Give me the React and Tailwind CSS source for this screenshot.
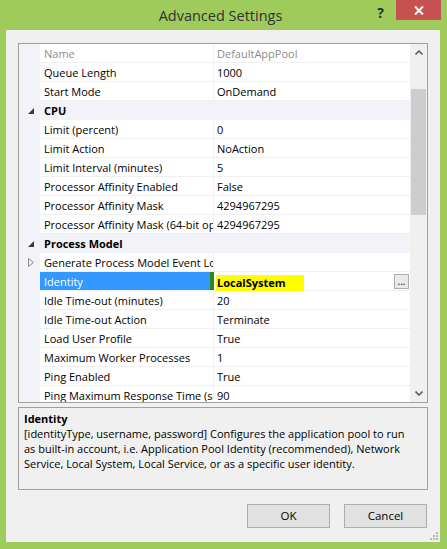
import React from "react";

const rows = [
  { name: "Name", value: "DefaultAppPool", muted: true },
  { name: "Queue Length", value: "1000" },
  { name: "Start Mode", value: "OnDemand" },
  { cat: "CPU" },
  { name: "Limit (percent)", value: "0" },
  { name: "Limit Action", value: "NoAction" },
  { name: "Limit Interval (minutes)", value: "5" },
  { name: "Processor Affinity Enabled", value: "False" },
  { name: "Processor Affinity Mask", value: "4294967295" },
  { name: "Processor Affinity Mask (64-bit option)", value: "4294967295" },
  { cat: "Process Model" },
  { name: "Generate Process Model Event Log Entry", value: "", expand: true },
  { name: "Identity", value: "LocalSystem", selected: true },
  { name: "Idle Time-out (minutes)", value: "20" },
  { name: "Idle Time-out Action", value: "Terminate" },
  { name: "Load User Profile", value: "True" },
  { name: "Maximum Worker Processes", value: "1" },
  { name: "Ping Enabled", value: "True" },
  { name: "Ping Maximum Response Time (seconds)", value: "90" },
];

const CollapseIcon = () => (
  <svg width="6" height="6" viewBox="0 0 6 6">
    <polygon points="6,0 6,6 0,6" fill="#3c3c3c" />
  </svg>
);

const ExpandIcon = () => (
  <svg width="6" height="9" viewBox="0 0 6 9">
    <polygon points="0.5,0.5 5.5,4.5 0.5,8.5" fill="none" stroke="#8a8a8a" strokeWidth="1" />
  </svg>
);

const Row = ({ row }) => {
  if (row.cat) {
    return (
      <div className="flex h-[19px] shrink-0 bg-[#f1f3f8]">
        <div className="w-[21px] flex items-center justify-center pl-[2px]">
          <CollapseIcon />
        </div>
        <div className="pl-[4px] pt-[1px] leading-[18px] font-bold text-black">{row.cat}</div>
      </div>
    );
  }
  return (
    <div className="flex h-[19px] shrink-0">
      <div className="w-[21px] bg-[#f1f3f8] flex items-center justify-center pl-[2px]">
        {row.expand && <ExpandIcon />}
      </div>
      {row.selected ? (
        <div className="w-[174px] flex border-b border-[#f0f0f0]">
          <div className="w-[170px] bg-[#3399ff] text-white pl-[4px] pt-[1px] leading-[17px] whitespace-nowrap overflow-hidden">
            {row.name}
          </div>
          <div className="w-[4px] bg-[#2e8b12]" />
        </div>
      ) : (
        <div
          className={`w-[174px] border-r border-b border-[#f0f0f0] pl-[4px] pt-[1px] leading-[17px] whitespace-nowrap overflow-hidden ${
            row.muted ? "text-[#8c8c8c]" : "text-black"
          }`}
        >
          {row.name}
        </div>
      )}
      {row.selected ? (
        <div className="flex-1 flex items-center border-b border-[#f0f0f0] pl-[2px] pr-[1px]">
          <span className="bg-[#ffff00] font-bold text-black leading-[16px] pl-[1px] pr-[18px] mt-[3px]">
            {row.value}
          </span>
          <div className="ml-auto w-[15px] h-[15px] border border-[#adadad] bg-[#e9e9e9] text-[10px] leading-[10px] text-black flex items-center justify-center">
            ...
          </div>
        </div>
      ) : (
        <div
          className={`flex-1 border-b border-[#f0f0f0] pl-[3px] pt-[1px] leading-[17px] whitespace-nowrap overflow-hidden ${
            row.muted ? "text-[#8c8c8c]" : "text-black"
          }`}
        >
          {row.value}
        </div>
      )}
    </div>
  );
};

const Chevron = ({ up }) => (
  <svg width="8" height="5" viewBox="0 0 8 5">
    <polyline
      points={up ? "0.5,4.5 4,1 7.5,4.5" : "0.5,0.5 4,4 7.5,0.5"}
      fill="none"
      stroke="#606060"
      strokeWidth="1.6"
    />
  </svg>
);

export default function App() {
  return (
    <div
      className="w-[447px] h-[549px] bg-[#9ecb5c] flex flex-col pl-[6px] pr-[7px] pb-[7px] text-[11px]"
      style={{ fontFamily: '"Open Sans", "Noto Sans", sans-serif' }}
    >
      {/* title bar */}
      <div className="h-[30px] flex shrink-0 -mr-[7px] -ml-[6px]">
        <div className="flex-1" />
        <div className="text-[14.5px] text-[#333333] leading-[30px] pt-[1px]">Advanced Settings</div>
        <div className="flex-1 flex justify-end items-start pr-[6px]">
          <div className="text-[14px] font-bold text-[#2b2b2b] leading-[20px] mt-[3px] mr-[12px]">?</div>
          <div className="w-[45px] h-[20px] bg-[#c75050] flex items-center justify-center">
            <svg width="10" height="9" viewBox="0 0 10 9">
              <path d="M1 0.5 L9 8.5 M9 0.5 L1 8.5" stroke="white" strokeWidth="2" />
            </svg>
          </div>
        </div>
      </div>

      {/* client */}
      <div className="relative flex-1 bg-[#f0f0f0] flex flex-col px-[12px] pt-[13px]">
        {/* property grid */}
        <div className="h-[360px] border border-[#a0a0a0] bg-white flex shrink-0">
          <div className="w-[391px] flex flex-col overflow-hidden">
            {rows.map((r, i) => (
              <Row key={i} row={r} />
            ))}
          </div>
          <div className="w-[17px] bg-[#f0f0f0] flex flex-col">
            <div className="h-[17px] flex items-center justify-center">
              <Chevron up />
            </div>
            <div className="flex-1 flex flex-col pt-[28px]">
              <div className="mx-[1px] w-[15px] h-[126px] bg-[#cdcdcd]" />
            </div>
            <div className="h-[17px] flex items-center justify-center">
              <Chevron />
            </div>
          </div>
        </div>

        {/* description */}
        <div className="mt-[4px] h-[83px] border border-[#a0a0a0] bg-[#f0f0f0] px-[5px] pt-[3px] shrink-0 text-black">
          <div className="font-bold leading-[15px]">Identity</div>
          <div className="leading-[15px]">
            [identityType, username, password] Configures the application pool to run
            <br />
            as built-in account, i.e. Application Pool Identity (recommended), Network
            <br />
            Service, Local System, Local Service, or as a specific user identity.
          </div>
        </div>

        {/* buttons */}
        <div className="mt-[14px] flex justify-end gap-[14px] pr-[1px]">
          <button className="w-[83px] h-[24px] border border-[#adadad] bg-[#e1e1e1] text-[11.5px] text-black">
            OK
          </button>
          <button className="w-[83px] h-[24px] border border-[#adadad] bg-[#e1e1e1] text-[11.5px] text-black">
            Cancel
          </button>
        </div>

        {/* size grip */}
        <svg className="absolute right-[2px] bottom-[2px]" width="8" height="8" viewBox="0 0 8 8">
          <rect x="6" y="0" width="2" height="2" fill="#b8b8b8" />
          <rect x="3" y="3" width="2" height="2" fill="#b8b8b8" />
          <rect x="6" y="3" width="2" height="2" fill="#b8b8b8" />
          <rect x="0" y="6" width="2" height="2" fill="#b8b8b8" />
          <rect x="3" y="6" width="2" height="2" fill="#b8b8b8" />
          <rect x="6" y="6" width="2" height="2" fill="#b8b8b8" />
        </svg>
      </div>
    </div>
  );
}
